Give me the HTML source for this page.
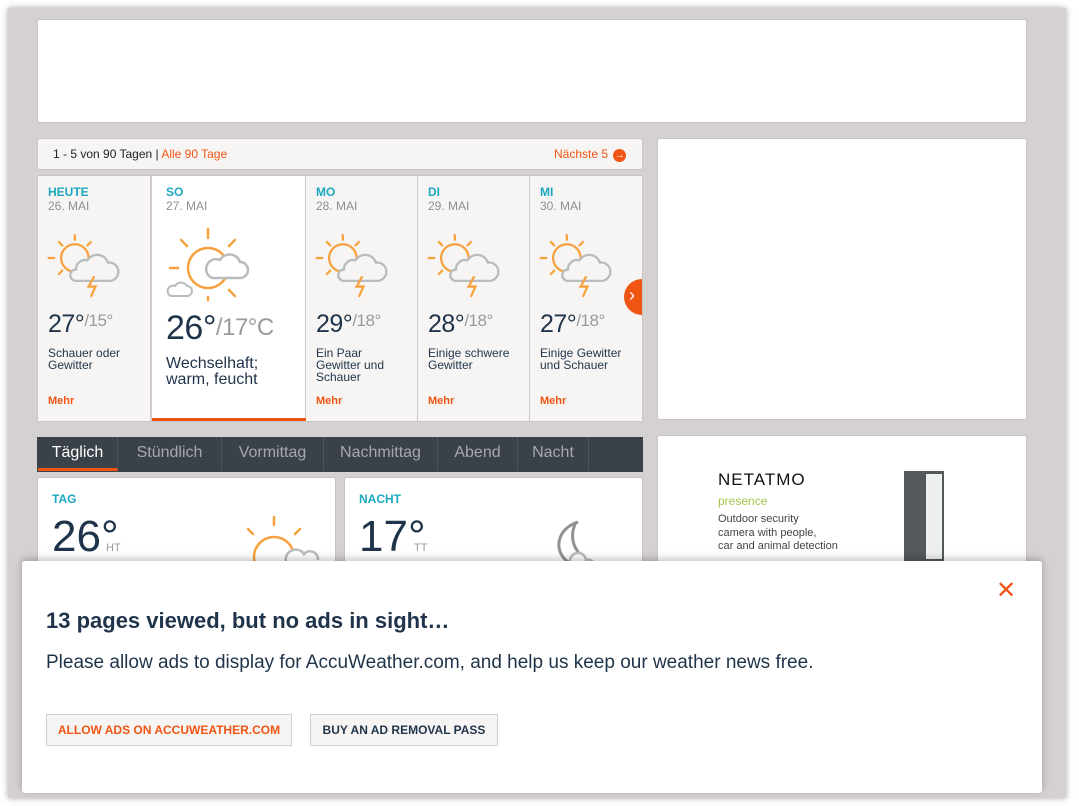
<!DOCTYPE html>
<html><head><meta charset="utf-8"><style>
*{margin:0;padding:0;box-sizing:border-box}
body{width:1079px;height:806px;background:#fff;font-family:"Liberation Sans",Arial,sans-serif;position:relative;overflow:hidden}
.win{position:absolute;left:8px;top:8px;width:1058px;height:790px;background:#d5d1d0;box-shadow:0 0 6px rgba(0,0,0,.35)}
.a{position:absolute}
.box{position:absolute;background:#fff;border:1px solid #c9c5c4;border-radius:3px}
.col{position:absolute;top:176px;height:245px;background:#f6f5f3;border-right:1px solid #cfcbca}
.day{position:absolute;left:10px;top:9px;font-size:12px;font-weight:bold;color:#1ba8c0}
.date{position:absolute;left:10px;top:23px;font-size:12px;color:#8e8e8e}
.tmp{position:absolute;left:10px;top:134px;font-size:25px;color:#1f344a;letter-spacing:-0.5px}
.tmp span{font-size:17px;color:#9a9a9a;vertical-align:6px}
.desc{position:absolute;left:10px;top:171px;font-size:12px;line-height:12px;color:#1f344a;width:96px}
.mehr{position:absolute;left:10px;top:219px;font-size:11px;font-weight:bold;color:#f05514}
.ico{position:absolute;left:6px;top:50px}
.tab{position:absolute;top:437px;height:34px;line-height:32px;font-size:16px;color:#a6a9ac;text-align:center;border-right:1px solid #4d545b}
</style></head><body>
<div class="win"></div>
<div class="box" style="left:37px;top:19px;width:990px;height:104px"></div>
<div class="box" style="left:37px;top:138px;width:606px;height:32px;background:#f6f5f3"></div>
<div class="a" style="left:53px;top:147px;font-size:12px;color:#222">1 - 5 von 90 Tagen | <span style="color:#f05514">Alle 90 Tage</span></div>
<div class="a" style="left:554px;top:147px;font-size:12px;color:#f05514">Nächste 5</div>
<div class="a" style="left:613px;top:149px;width:13px;height:13px;border-radius:50%;background:#f05514;color:#fff;font-size:10px;line-height:13px;text-align:center">→</div>

<div class="box" style="left:37px;top:175px;width:606px;height:247px;background:#f6f5f3"></div>
<svg width="0" height="0" style="position:absolute"><defs>
<g id="sm">
<g stroke="#f7a23e" stroke-width="2" fill="none" stroke-linecap="round">
<circle cx="27" cy="28" r="12"/>
<line x1="27" y1="8" x2="27" y2="12"/><line x1="13" y1="14" x2="16" y2="17"/><line x1="41" y1="14" x2="38" y2="17"/>
<line x1="4" y1="28" x2="9" y2="28"/><line x1="13" y1="42" x2="16" y2="39"/>
</g>
<path d="M28 48 h30 a8 8 0 0 0 -2 -16 a10 10 0 0 0 -18 -2 a8 8 0 0 0 -10 8 a5 5 0 0 0 0 10z" fill="#f6f5f3" stroke="#b9bcbf" stroke-width="2"/>
<path d="M44 44 l-5 9 h6 l-4 9" stroke="#f7a23e" stroke-width="2" fill="none"/>
</g></defs></svg>

<div class="col" style="left:38px;width:113px"><div class="day">HEUTE</div><div class="date">26. MAI</div><svg class="ico" width="80" height="80" viewBox="0 0 70 70"><use href="#sm"/></svg><div class="tmp">27°<span>/15°</span></div><div class="desc">Schauer oder Gewitter</div><div class="mehr">Mehr</div></div>
<div class="col" style="left:151px;width:155px;background:#fff;border-left:1px solid #cfcbca">
<div class="day" style="left:14px">SO</div><div class="date" style="left:14px">27. MAI</div>
<svg class="a" style="left:12px;top:44px" width="90" height="82">
<g stroke="#f7a23e" stroke-width="2.5" fill="none" stroke-linecap="round">
<circle cx="44" cy="48" r="20"/>
<line x1="44" y1="9" x2="44" y2="18"/><line x1="17" y1="20" x2="23" y2="26"/><line x1="71" y1="20" x2="65" y2="26"/>
<line x1="6" y1="48" x2="14" y2="48"/><line x1="65" y1="70" x2="71" y2="76"/><line x1="44" y1="80" x2="44" y2="77"/>
</g>
<path d="M48 58 h28 a8 8 0 0 0 0 -16 a11 11 0 0 0 -20 -2 a9 9 0 0 0 -8 18z" fill="#fff" stroke="#b9bcbf" stroke-width="2.5"/>
<path d="M7 76 h16 a5 5 0 0 0 0 -10 a7 7 0 0 0 -12 0 a5 5 0 0 0 -4 10z" fill="#fff" stroke="#b9bcbf" stroke-width="2"/>
</svg>
<div class="tmp" style="left:14px;top:133px;font-size:34px">26°<span style="font-size:24px;vertical-align:4px">/17°C</span></div>
<div class="desc" style="left:14px;top:180px;font-size:16px;line-height:16px;width:130px">Wechselhaft; warm, feucht</div>
<div class="a" style="left:0;bottom:0;width:154px;height:3px;background:#f05514"></div></div>
<div class="col" style="left:306px;width:112px"><div class="day">MO</div><div class="date">28. MAI</div><svg class="ico" width="80" height="80" viewBox="0 0 70 70"><use href="#sm"/></svg><div class="tmp">29°<span>/18°</span></div><div class="desc" style="width:84px">Ein Paar Gewitter und Schauer</div><div class="mehr">Mehr</div></div>
<div class="col" style="left:418px;width:112px"><div class="day">DI</div><div class="date">29. MAI</div><svg class="ico" width="80" height="80" viewBox="0 0 70 70"><use href="#sm"/></svg><div class="tmp">28°<span>/18°</span></div><div class="desc">Einige schwere Gewitter</div><div class="mehr">Mehr</div></div>
<div class="col" style="left:530px;width:112px;border-right:none"><div class="day">MI</div><div class="date">30. MAI</div><svg class="ico" width="80" height="80" viewBox="0 0 70 70"><use href="#sm"/></svg><div class="tmp">27°<span>/18°</span></div><div class="desc">Einige Gewitter und Schauer</div><div class="mehr">Mehr</div></div>
<div class="a" style="left:624px;top:279px;width:36px;height:36px;border-radius:50%;background:#f05514;clip-path:inset(0 18px 0 0)"></div>
<div class="a" style="left:629px;top:285px;color:#fff;font-size:18px">›</div>

<div class="box" style="left:657px;top:138px;width:370px;height:282px"></div>
<div class="box" style="left:657px;top:435px;width:370px;height:200px"></div>
<div class="a" style="left:718px;top:470px;font-size:17px;letter-spacing:1px;color:#111">NETATMO</div>
<div class="a" style="left:718px;top:494px;font-size:12px;color:#a6c54a">presence</div>
<div class="a" style="left:718px;top:513px;font-size:11px;line-height:13.5px;color:#444">Outdoor security<br>camera with people,<br>car and animal detection</div>
<div class="a" style="left:904px;top:471px;width:40px;height:100px;background:#55585b"></div>
<div class="a" style="left:926px;top:474px;width:16px;height:85px;background:#eef0f0"></div>

<div class="a" style="left:37px;top:437px;width:606px;height:35px;background:#3a4149"></div>
<div class="tab" style="left:38px;width:80px;color:#fff;border-bottom:3px solid #f05514">Täglich</div>
<div class="tab" style="left:118px;width:104px">Stündlich</div>
<div class="tab" style="left:222px;width:102px">Vormittag</div>
<div class="tab" style="left:324px;width:114px">Nachmittag</div>
<div class="tab" style="left:438px;width:80px">Abend</div>
<div class="tab" style="left:518px;width:71px">Nacht</div>

<div class="box" style="left:37px;top:477px;width:299px;height:120px"></div>
<div class="box" style="left:344px;top:477px;width:299px;height:120px"></div>
<div class="a" style="left:52px;top:492px;font-size:12px;font-weight:bold;color:#1ba8c0">TAG</div>
<div class="a" style="left:52px;top:512px;font-size:44px;color:#1f344a">26°</div>
<div class="a" style="left:106px;top:542px;font-size:11px;color:#9a9a9a">HT</div>
<div class="a" style="left:359px;top:492px;font-size:12px;font-weight:bold;color:#1ba8c0">NACHT</div>
<div class="a" style="left:359px;top:512px;font-size:44px;color:#1f344a">17°</div>
<div class="a" style="left:414px;top:542px;font-size:11px;color:#9a9a9a">TT</div>
<svg class="a" style="left:228px;top:512px" width="95" height="50"><g stroke="#f7a23e" stroke-width="2.5" fill="none" stroke-linecap="round"><circle cx="46" cy="45" r="20"/><line x1="46" y1="5" x2="46" y2="13"/><line x1="20" y1="17" x2="25" y2="22"/><line x1="72" y1="17" x2="67" y2="22"/></g><path d="M58 50 a10 10 0 0 1 18 -8 a8 8 0 0 1 14 6" fill="#fff" stroke="#b9bcbf" stroke-width="2.5"/></svg>
<svg class="a" style="left:540px;top:520px" width="60" height="42"><path d="M38 2 C18 8 12 30 28 42" fill="none" stroke="#8f9295" stroke-width="3"/><path d="M36 2 C30 14 32 26 40 34" fill="none" stroke="#8f9295" stroke-width="3"/><path d="M30 42 a8 8 0 0 1 16 -2 a6 6 0 0 1 8 4" fill="#fff" stroke="#b9bcbf" stroke-width="2.5"/></svg>

<div class="a" style="left:22px;top:561px;width:1020px;height:232px;background:#fff;border-radius:3px;box-shadow:0 -2px 8px rgba(0,0,0,.25)">
<div class="a" style="left:974px;top:18px;font-size:24px;color:#f05514;line-height:24px">✕</div>
<div class="a" style="left:24px;top:47px;font-size:22px;font-weight:bold;color:#1f344a">13 pages viewed, but no ads in sight…</div>
<div class="a" style="left:24px;top:91px;font-size:19px;color:#1f344a">Please allow ads to display for AccuWeather.com, and help us keep our weather news free.</div>
<div class="a" style="left:24px;top:153px;width:246px;height:32px;border:1px solid #d0d0d0;background:#f6f5f3;font-size:12px;font-weight:bold;color:#f05514;text-align:center;line-height:30px">ALLOW ADS ON ACCUWEATHER.COM</div>
<div class="a" style="left:288px;top:153px;width:188px;height:32px;border:1px solid #d0d0d0;background:#f6f5f3;font-size:12px;font-weight:bold;color:#1f344a;text-align:center;line-height:30px">BUY AN AD REMOVAL PASS</div>
</div>
</body></html>
